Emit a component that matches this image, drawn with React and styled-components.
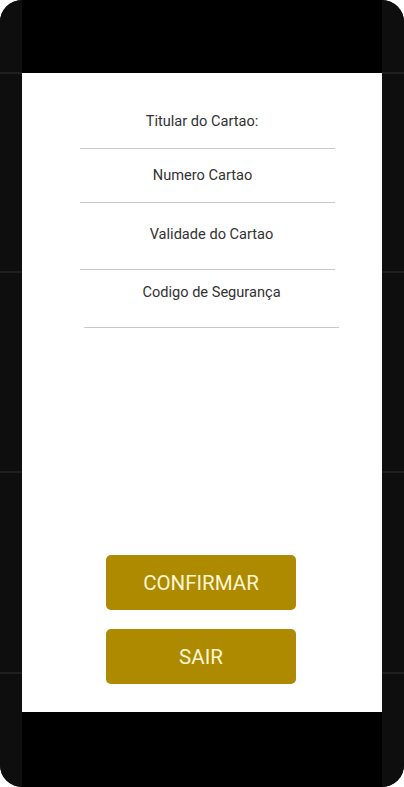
import React from "react";
import styled, { createGlobalStyle } from "styled-components";

const Global = createGlobalStyle`
  html, body { margin: 0; padding: 0; background: #ffffff; }
  body { font-family: Roboto, "Noto Sans", Arial, sans-serif; }
  * { box-sizing: border-box; }
`;

const Frame = styled.div`
  width: 404px;
  height: 787px;
  background: #0e0e0e;
  border-radius: 22px;
  overflow: hidden;
  display: grid;
  grid-template-columns: 22px 1fr 22px;
`;

const Side = styled.div`
  height: 100%;
  background:
    linear-gradient(#1f1f1f, #1f1f1f) 0 72px / 100% 2px no-repeat,
    linear-gradient(#1f1f1f, #1f1f1f) 0 271px / 100% 2px no-repeat,
    linear-gradient(#1f1f1f, #1f1f1f) 0 471px / 100% 2px no-repeat,
    linear-gradient(#1f1f1f, #1f1f1f) 0 672px / 100% 2px no-repeat,
    #0e0e0e;
`;

const Screen = styled.div`
  display: flex;
  flex-direction: column;
  background: #000;
`;

const Bar = styled.div`
  height: ${(p) => p.$h}px;
  background: #000;
  flex: none;
`;

const Content = styled.div`
  height: 639px;
  background: #ffffff;
  display: flex;
  flex-direction: column;
`;

const Field = styled.div`
  display: flex;
  flex-direction: column;
  margin-top: ${(p) => p.$top}px;
`;

const Label = styled.div`
  font-size: 14.6px;
  line-height: 16px;
  color: #333333;
  text-align: center;
  padding-left: ${(p) => p.$shift * 2}px;
  white-space: nowrap;
`;

const Line = styled.div`
  height: 1px;
  background: #c9c9c9;
  width: 255px;
  margin-left: ${(p) => p.$left}px;
  margin-top: ${(p) => p.$gap}px;
`;

const Actions = styled.div`
  margin-top: auto;
  padding-bottom: 28px;
  display: flex;
  flex-direction: column;
  align-items: center;
  gap: 19px;
`;

const Button = styled.button`
  width: 190px;
  height: 55px;
  border: none;
  border-radius: 5px;
  background: #ad8a00;
  color: #fff6d2;
  font-family: Roboto, "Noto Sans", Arial, sans-serif;
  font-size: 20.5px;
  font-weight: 400;
  letter-spacing: 0;
  margin-left: -2px;
  cursor: pointer;
`;

const fields = [
  { label: "Titular do Cartao:", top: 40, gap: 19, shift: -0.5, left: 58 },
  { label: "Numero Cartao", top: 18, gap: 19, shift: 0.5, left: 58 },
  { label: "Validade do Cartao", top: 23, gap: 27, shift: 9.5, left: 58 },
  { label: "Codigo de Segurança", top: 14, gap: 27, shift: 9.5, left: 62 },
];

export default function App() {
  return (
    <>
      <Global />
      <Frame>
        <Side />
        <Screen>
          <Bar $h={73} />
          <Content>
            {fields.map((f) => (
              <Field key={f.label} $top={f.top}>
                <Label $shift={f.shift}>{f.label}</Label>
                <Line $gap={f.gap} $left={f.left} />
              </Field>
            ))}
            <Actions>
              <Button>CONFIRMAR</Button>
              <Button>SAIR</Button>
            </Actions>
          </Content>
          <Bar $h={75} />
        </Screen>
        <Side />
      </Frame>
    </>
  );
}
